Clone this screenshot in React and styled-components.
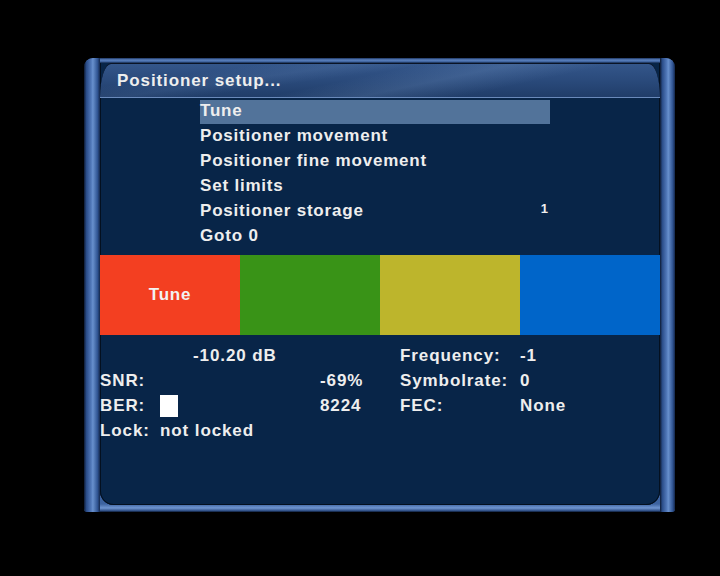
import styled, { createGlobalStyle } from 'styled-components'

const GlobalStyle = createGlobalStyle`
  html, body {
    margin: 0;
    padding: 0;
    background: #000;
  }
  body {
    font-family: "Liberation Sans", Arial, sans-serif;
    font-weight: bold;
    color: #eeeeee;
  }
`

const menuItems = [
  { label: 'Tune', selected: true },
  { label: 'Positioner movement' },
  { label: 'Positioner fine movement' },
  { label: 'Set limits' },
  { label: 'Positioner storage', value: '1' },
  { label: 'Goto 0' },
]

const keys = [
  { color: '#f33f21', label: 'Tune' },
  { color: '#399317' },
  { color: '#bdb52c' },
  { color: '#0065c9' },
]

const App = () => {
  return (
    <Screen>
      <GlobalStyle />
      <Frame>
        <Pipe side='left' />
        <Panel>
          <TitleBar>Positioner setup...</TitleBar>
          <Menu>
            {menuItems.map((item) => (
              <MenuRow key={item.label} selected={item.selected}>
                <span>{item.label}</span>
                {item.value && <MenuValue>{item.value}</MenuValue>}
              </MenuRow>
            ))}
          </Menu>
          <KeyBar>
            {keys.map((k, i) => (
              <Key key={i} color={k.color}>
                {k.label}
              </Key>
            ))}
          </KeyBar>
          <Info>
            <Level>-10.20 dB</Level>
            <Cell col={4}>Frequency:</Cell>
            <Cell col={5}>-1</Cell>

            <Cell col={1}>SNR:</Cell>
            <Cell col={3}>-69%</Cell>
            <Cell col={4}>Symbolrate:</Cell>
            <Cell col={5}>0</Cell>

            <Cell col={1}>BER:</Cell>
            <Cell col={2}>
              <BerBox />
            </Cell>
            <Cell col={3}>8224</Cell>
            <Cell col={4}>FEC:</Cell>
            <Cell col={5}>None</Cell>

            <Cell col={1}>Lock:</Cell>
            <Cell col={2}>not locked</Cell>
          </Info>
        </Panel>
        <Pipe side='right' />
      </Frame>
    </Screen>
  )
}

export default App

const Screen = styled.div`
  width: 720px;
  height: 576px;
  box-sizing: border-box;
  padding: 58px 0 0 84px;
  background: #000;
`

const Frame = styled.div`
  display: flex;
  width: 591px;
  height: 454px;
  border-radius: 9px 9px 3px 3px;
  background: linear-gradient(
    180deg,
    #1c3561 0px,
    #5d84c2 2px,
    #3a5e98 4px,
    #0c1d38 5px,
    #2c4d85 60%,
    #3d63a0 calc(100% - 8px),
    #6f95d1 calc(100% - 4px),
    #2a4a80 calc(100% - 1px),
    #0a1528 100%
  );
`

const Pipe = styled.div`
  width: ${(p) => (p.side === 'left' ? '16px' : '15px')};
  border-radius: ${(p) => (p.side === 'left' ? '9px 0 0 3px' : '0 9px 3px 0')};
  background: linear-gradient(
    90deg,
    #0d1a33 0%,
    #2a4c88 15%,
    #5279ba 45%,
    #6890cd 55%,
    #2f5391 85%,
    #13264a 100%
  );
`

const Panel = styled.div`
  flex: 1;
  margin: 5px 0 7px;
  display: flex;
  flex-direction: column;
  background: #082548;
  border-radius: 0 0 14px 14px;
  box-shadow: inset 0 -1px 0 #04101f, inset 1px 0 0 #04101f, inset -1px 0 0 #04101f;
  overflow: hidden;
`

const TitleBar = styled.div`
  height: 33px;
  line-height: 33px;
  padding-left: 17px;
  font-size: 17px;
  letter-spacing: 0.9px;
  color: #eeeeee;
  border-radius: 11px 11px 0 0 / 34px 34px 0 0;
  border-top: 1px solid #0a1426;
  border-bottom: 1px solid #6a8abb;
  background:
    linear-gradient(168deg, transparent 45%, rgba(140, 175, 220, 0.18) 58%, transparent 72%),
    linear-gradient(172deg, transparent 20%, rgba(140, 175, 220, 0.1) 32%, transparent 42%),
    linear-gradient(180deg, #34568a 0%, #2a4a7b 50%, #203d69 100%);
`

const Menu = styled.div`
  margin: 2px 0 0 100px;
  width: 350px;
`

const MenuRow = styled.div`
  display: flex;
  justify-content: space-between;
  align-items: flex-start;
  height: ${(p) => (p.selected ? '24px' : '25px')};
  margin-bottom: ${(p) => (p.selected ? '1px' : '0')};
  line-height: 21px;
  font-size: 17px;
  letter-spacing: 0.8px;
  background: ${(p) => (p.selected ? '#52739a' : 'transparent')};
`

const MenuValue = styled.span`
  font-size: 13px;
  letter-spacing: 0;
  line-height: 18px;
  padding-right: 2px;
`

const KeyBar = styled.div`
  display: grid;
  grid-template-columns: repeat(4, 1fr);
  height: 80px;
  margin-top: 5px;
`

const Key = styled.div`
  display: flex;
  align-items: center;
  justify-content: center;
  background: ${(p) => p.color};
  font-size: 17px;
  letter-spacing: 0.8px;
  color: #f2f2f2;
`

const Info = styled.div`
  display: grid;
  grid-template-columns: 60px 160px 80px 120px 1fr;
  grid-auto-rows: 25px;
  margin-top: 8px;
  font-size: 17px;
  letter-spacing: 0.9px;
  line-height: 25px;
`

const Cell = styled.div`
  grid-column: ${(p) => p.col};
  white-space: nowrap;
  display: flex;
  align-items: center;
`

const Level = styled.div`
  grid-column: 2;
  padding-left: 33px;
  white-space: nowrap;
`

const BerBox = styled.div`
  width: 18px;
  height: 22px;
  background: #ffffff;
`
